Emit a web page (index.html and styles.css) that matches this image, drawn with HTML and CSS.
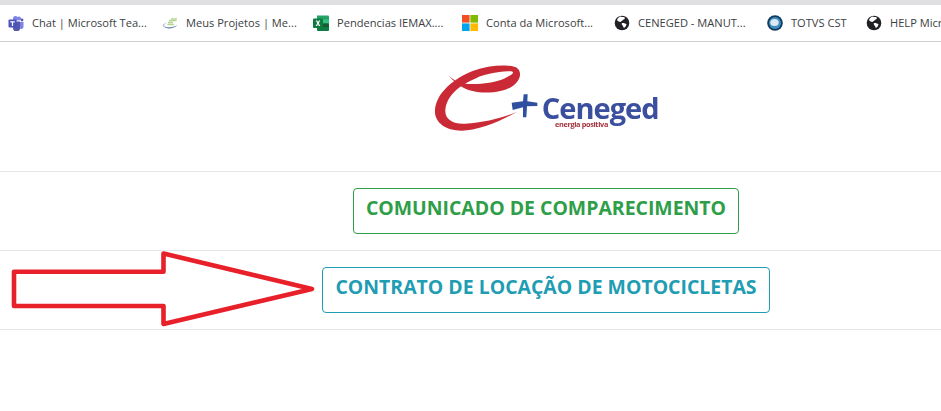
FILE: index.html
```html
<!DOCTYPE html>
<html lang="pt-BR">
<head>
<meta charset="utf-8">
<title>Ceneged</title>
<link rel="stylesheet" href="styles.css">
</head>
<body>
<div class="top-strip"></div>
<nav class="bookmarks">
  <a class="bookmark">
    <svg class="icon" viewBox="0 0 16 16"><circle cx="11" cy="3.6" r="2" fill="#7b83eb"/><circle cx="14" cy="5" r="1.4" fill="#5558af"/><path d="M9 7h6.500v4.500a2.500 2.500 0 0 1-5 0z" fill="#7b83eb"/><circle cx="7.500" cy="3.500" r="2.500" fill="#7b83eb"/><path d="M4 6.500h8v6a3.500 3.500 0 0 1-7 .8z" fill="#5558af"/><rect x="0.500" y="4.500" width="8" height="8" rx="1" fill="#4b53bc"/><path d="M2.300 6.300h4.400v1.100H5.100v3.600H3.900V7.400H2.300z" fill="#fff"/></svg>
    <span>Chat | Microsoft Tea...</span>
  </a>
  <a class="bookmark">
    <svg class="icon" viewBox="0 0 16 16"><path d="M0.500 10.500c3 2.500 10 2.500 15-.5-4 4.500-12 4.500-15 .5z" fill="#5f7f9f"/><path d="M0.500 10.500c1-1.500 2.500-2.500 4.500-3-1.800 1-2.800 2-3 3.200z" fill="#8fa3b5"/><path d="M6 7.500h5M5.500 9.500h6.500M7 5.500h7.500M9 3.800h6" stroke="#b4d492" stroke-width="1.300" fill="none"/></svg>
    <span>Meus Projetos | Me...</span>
  </a>
  <a class="bookmark">
    <svg class="icon" viewBox="0 0 16 16"><path d="M4 0.500h11a1 1 0 0 1 1 1V8H4z" fill="#21a366"/><rect x="4" y="8" width="12" height="8" rx="1" fill="#107c41"/><rect x="10" y="4.500" width="6" height="4" fill="#33c481"/><rect x="10" y="8.500" width="6" height="3.500" fill="#185c37"/><rect x="0" y="3.500" width="10" height="9.500" rx="1" fill="#0f7b40"/><path d="M2.800 5.500h1.500L5 7.300l.8-1.800h1.400L5.800 8.200l1.500 2.800H5.800L5 9.100 4.100 11H2.700l1.500-2.800z" fill="#fff"/></svg>
    <span>Pendencias IEMAX....</span>
  </a>
  <a class="bookmark">
    <svg class="icon" viewBox="0 0 16 16"><rect width="7.600" height="7.600" fill="#f25022"/><rect x="8.400" width="7.600" height="7.600" fill="#7fba00"/><rect y="8.400" width="7.600" height="7.600" fill="#00a4ef"/><rect x="8.400" y="8.400" width="7.600" height="7.600" fill="#ffb900"/></svg>
    <span>Conta da Microsoft...</span>
  </a>
  <a class="bookmark">
    <svg class="icon" viewBox="0 0 16 16"><circle cx="8" cy="8" r="7.300" fill="#202124"/><path d="M6 1.500c1.500.5 3.500.3 4.800 1 .4 1-.6 2-1.800 2.300-.5 1.200-2 1.300-2.600 2.300C5 6.800 3.500 6 3 5c.5-1.500 1.700-2.800 3-3.500zM8 8c1.500-.3 3.500.3 4.500 1.300-.2 1.500-1.200 3-2.600 3.700-.5-1-1-2-1.500-2.700C7.800 9.500 7.500 8.800 8 8z" fill="#fff"/></svg>
    <span>CENEGED - MANUT...</span>
  </a>
  <a class="bookmark">
    <svg class="icon" viewBox="0 0 16 16"><circle cx="8" cy="8" r="7.800" fill="#123a5e"/><circle cx="8" cy="8" r="6" fill="#3f8fc0"/><ellipse cx="7.500" cy="7.500" rx="4.200" ry="3.600" fill="#dfe9f2"/></svg>
    <span>TOTVS CST</span>
  </a>
  <a class="bookmark">
    <svg class="icon" viewBox="0 0 16 16"><circle cx="8" cy="8" r="7.300" fill="#202124"/><path d="M6 1.500c1.500.5 3.500.3 4.800 1 .4 1-.6 2-1.800 2.300-.5 1.200-2 1.300-2.600 2.300C5 6.800 3.500 6 3 5c.5-1.500 1.700-2.800 3-3.500zM8 8c1.500-.3 3.500.3 4.500 1.300-.2 1.500-1.200 3-2.600 3.700-.5-1-1-2-1.500-2.700C7.800 9.500 7.500 8.800 8 8z" fill="#fff"/></svg>
    <span>HELP Microsoft</span>
  </a>
</nav>
<main class="page">
  <header class="logo-row">
    <svg class="logo" viewBox="-6 0 708 225" role="img" aria-label="Ceneged energia positiva">
      <path d="M262 155C200 190 140 212 95 212C45 212 12 185 15 150C18 100 70 55 130 32C175 15 235 12 258 22C280 35 270 65 245 80C210 102 130 104 95 80C75 68 60 52 48 38C60 52 72 60 88 68C120 76 185 72 222 56C248 44 256 36 243 34C220 34 170 38 135 56C90 75 50 105 46 150C44 180 72 193 105 191C160 188 215 175 262 155Z" fill="#c92a36"/>
      <path d="M245 128L279 124L281 103L293 103L292 124L322 128L322 138L291 139L289 172L279 172L279 142L248 150Z" fill="#2f50a0"/>
      <text class="logo-name" x="335" y="177" textLength="354">Ceneged</text>
      <text class="logo-tag" x="375" y="201" textLength="160">energia positiva</text>
    </svg>
  </header>
  <div class="action-row"><a class="action action-success">COMUNICADO DE COMPARECIMENTO</a></div>
  <div class="action-row action-row-last"><a class="action action-info">CONTRATO DE LOCAÇÃO DE MOTOCICLETAS</a></div>
  <svg class="arrow" viewBox="0 0 320 90"><path d="M14 20.700H163.500V2.500L312 38 163.500 73V55H14Z" fill="none" stroke="#e8202a" stroke-width="4.600" stroke-linejoin="round"/></svg>
</main>
</body>
</html>
```
FILE: styles.css
```css
* { box-sizing: border-box; }
html, body { margin: 0; padding: 0; }
body {
  width: 941px;
  height: 411px;
  overflow: hidden;
  background: #fff;
  font-family: "Open Sans", "Liberation Sans", sans-serif;
}
.top-strip { height: 5px; background: #dfdfe1; }
.bookmarks {
  display: grid;
  grid-template-columns: 154px 151px 149px 152px 153px 99px 1fr;
  height: 37px;
  padding-left: 8px;
  border-bottom: 1px solid #cfd0d1;
  overflow: hidden;
  font-size: 11.1px;
  color: #3c4043;
}
.bookmark {
  display: flex;
  align-items: center;
  gap: 8px;
  padding-bottom: 1px;
  white-space: nowrap;
  overflow: hidden;
}
.icon { width: 16px; height: 16px; flex: none; }
.page { position: relative; }
.logo-row {
  display: flex;
  justify-content: center;
  height: 129px;
  padding: 18px 0 0 151px;
}
.logo { width: 236px; height: 75px; filter: blur(0.35px); }
.logo-name {
  font-family: "Open Sans", sans-serif;
  font-size: 87px;
  font-weight: 700;
  fill: #3b4f9e;
}
.logo-tag {
  font-family: "Open Sans", sans-serif;
  font-size: 22px;
  font-weight: 700;
  fill: #a5333c;
}
.action-row {
  display: flex;
  justify-content: center;
  padding: 16px 0 16px 151px;
  border-top: 1px solid #e6e6e6;
}
.action-row-last { border-bottom: 1px solid #e6e6e6; }
.action {
  display: block;
  padding: 5px 12px 11px;
  border: 1px solid currentColor;
  border-radius: 4px;
  font-size: 19.45px;
  font-weight: 700;
  line-height: 28px;
  white-space: nowrap;
}
.action-success { color: #2f9e48; }
.action-info { color: #1f9db3; }
.arrow {
  position: absolute;
  left: 0;
  top: 209px;
  width: 320px;
  height: 90px;
}
```
